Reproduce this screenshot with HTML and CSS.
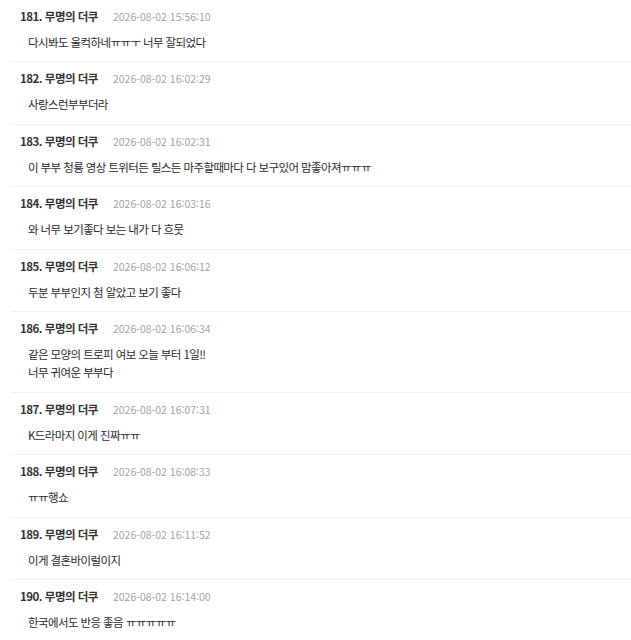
FILE: index.html
```html
<!DOCTYPE html>
<html lang="ko">
<head>
  <meta charset="UTF-8">
  <title>댓글</title>
  <link rel="stylesheet" href="styles.css">
</head>
<body>
  <ul class="comments">
    <li class="comment">
      <div class="head"><span class="name">181. 무명의 더쿠</span><span class="date">2026-08-02 15:56:10</span></div>
      <div class="text">다시봐도 울컥하네ㅠㅠㅜ 너무 잘되었다</div>
    </li>
    <li class="comment">
      <div class="head"><span class="name">182. 무명의 더쿠</span><span class="date">2026-08-02 16:02:29</span></div>
      <div class="text">사랑스런부부더라</div>
    </li>
    <li class="comment">
      <div class="head"><span class="name">183. 무명의 더쿠</span><span class="date">2026-08-02 16:02:31</span></div>
      <div class="text">이 부부 청룡 영상 트위터든 릴스든 마주할때마다 다 보구있어 맘좋아져ㅠㅠㅠ</div>
    </li>
    <li class="comment">
      <div class="head"><span class="name">184. 무명의 더쿠</span><span class="date">2026-08-02 16:03:16</span></div>
      <div class="text">와 너무 보기좋다 보는 내가 다 흐뭇</div>
    </li>
    <li class="comment">
      <div class="head"><span class="name">185. 무명의 더쿠</span><span class="date">2026-08-02 16:06:12</span></div>
      <div class="text">두분 부부인지 첨 알았고 보기 좋다</div>
    </li>
    <li class="comment">
      <div class="head"><span class="name">186. 무명의 더쿠</span><span class="date">2026-08-02 16:06:34</span></div>
      <div class="text">같은 모양의 트로피 여보 오늘 부터 1일!!<br>너무 귀여운 부부다</div>
    </li>
    <li class="comment">
      <div class="head"><span class="name">187. 무명의 더쿠</span><span class="date">2026-08-02 16:07:31</span></div>
      <div class="text">K드라마지 이게 진짜ㅠㅠ</div>
    </li>
    <li class="comment">
      <div class="head"><span class="name">188. 무명의 더쿠</span><span class="date">2026-08-02 16:08:33</span></div>
      <div class="text">ㅠㅠ행쇼</div>
    </li>
    <li class="comment">
      <div class="head"><span class="name">189. 무명의 더쿠</span><span class="date">2026-08-02 16:11:52</span></div>
      <div class="text">이게 결혼바이럴이지</div>
    </li>
    <li class="comment">
      <div class="head"><span class="name">190. 무명의 더쿠</span><span class="date">2026-08-02 16:14:00</span></div>
      <div class="text">한국에서도 반응 좋음 ㅠㅠㅠㅠㅠ</div>
    </li>
  </ul>
</body>
</html>
```

FILE: styles.css
```css
body {
  margin: 0;
  background: #fff;
  font-family: "Noto Sans CJK KR", "Noto Sans", sans-serif;
  color: #333;
}

.comments {
  list-style: none;
  margin: 0;
  padding: 0 0 0 10px;
}

.comment {
  padding: 7px 0 9.9px 10px;
  border-bottom: 1px solid #f0f0f0;
}

.head {
  display: flex;
  align-items: baseline;
  gap: 15px;
  height: 18px;
  line-height: 18px;
}

.name {
  font-size: 11.5px;
  font-weight: bold;
  letter-spacing: -0.5px;
  color: #333;
}

.date {
  font-size: 10.5px;
  color: #a3a3a3;
}

.text {
  margin-top: 8px;
  padding-left: 8px;
  font-size: 11.5px;
  line-height: 18.5px;
  letter-spacing: -0.6px;
  color: #2a2a2a;
}
```
